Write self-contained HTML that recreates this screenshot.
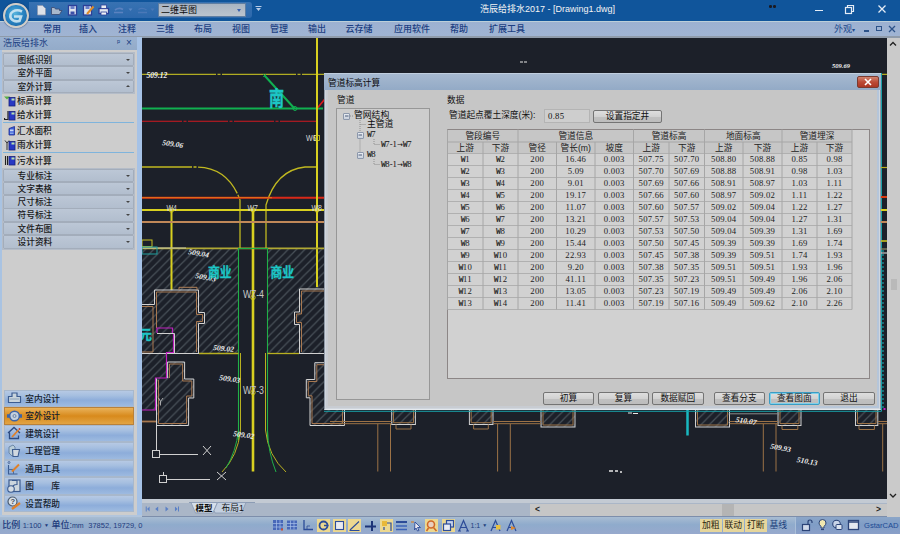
<!DOCTYPE html><html lang="zh"><head><meta charset="utf-8"><title>浩辰给排水2017</title><style>
*{box-sizing:border-box;margin:0;padding:0}
html,body{width:900px;height:534px;overflow:hidden;background:#1c2029}
body{position:relative;font-family:"Liberation Sans","Noto Sans CJK SC",sans-serif;font-size:9px;color:#111;line-height:1}
.a{position:absolute;white-space:nowrap}
#title{left:0;top:0;width:900px;height:20.500px;background:#10559b}
#qat{left:29px;top:2px;width:223px;height:15.500px;background:linear-gradient(#3872b2,#2c68ac);border-radius:0 3px 3px 0}
#menu{left:0;top:20.500px;width:900px;height:17.500px;background:linear-gradient(#9cb1d1,#a0b4d3);border-top:1.500px solid #bccfd9;border-bottom:2px solid #8f9baa}
.mi{top:3px;font-size:9px;font-weight:500;color:#1c3f82;transform:translateX(-50%)}
#left{left:0;top:37px;width:137px;height:477.500px;background:#cdcdcd;border-left:2px solid #a9c3e2}
#lhead{left:0;top:37px;width:137px;height:13px;background:linear-gradient(#9bb2d0,#93abc9);color:#1c3f82;font-size:9px;padding:2px 0 0 3px}
#lsplit{left:137px;top:37px;width:5px;height:480px;background:#a6c2e6}
.pb{left:3px;width:131px;height:13.5px;background:linear-gradient(#bcc7d6,#b2bece);border:1px solid #a3adbb;border-radius:1px;font-size:8.7px;font-weight:500;color:#1a1a1a;padding:2px 0 0 13.5px}
.pb i{position:absolute;right:3px;top:5px;width:0;height:0;border:2px solid transparent;border-top:2.5px solid #444}
.pb i.up{border-top:none;border-bottom:2.5px solid #444;top:4px}
.pi{left:17px;font-size:8.7px;font-weight:500;color:#1a1a1a}
.sep{left:3px;width:131px;height:1px;background:#7fb4dc}
.ico{width:6px;height:8px;background:#2744b8;border:1px solid #16257a}
.nb{left:4px;width:130px;height:17.5px;background:linear-gradient(#b6c9e4 0%,#a6bfe0 30%,#8dadda 62%,#9dbae0 100%);border:1px solid #a8b8cc;font-size:8.7px;font-weight:500;color:#141c2c;padding:4px 0 0 20.300px}
.nb.sel{background:linear-gradient(#e9b25a,#d88a1c 50%,#e2a444);border-color:#b9813a}
#draw{left:142px;top:38px}
#vsb{left:887px;top:38px;width:13px;height:479px;background:#cacaca}
#tabrow{left:142px;top:499px;width:745px;height:18px;background:#aab6c7;border-top:4px solid #c3cad3;border-bottom:1px solid #7d8eab}
#hsb{left:530px;top:503.500px;width:357px;height:12.500px;background:#c6c6c6}
#status{left:0;top:517px;width:900px;height:17px;background:linear-gradient(#a8bcd2 0,#8fabcc 45%,#97a9cd 100%)}
#dlg{left:324px;top:73px;width:557px;height:337px;background:linear-gradient(90deg,#c8ccd2,#c8ccd2 60%,#b4c5da);border:1px solid #8f99a6;border-bottom-color:#e4e8ec;box-shadow:0 0 0 1px #d0d6de inset}
#dlgtitle{left:324px;top:73px;width:557px;height:17px;background:linear-gradient(#a6b9d0,#93aac6);border-top:1px solid #c0cede;color:#0b0b0b;font-size:8.7px;padding:4.5px 0 0 4px}
#dlgbody{left:328px;top:90px;width:549px;height:316px;background:#c6c6c6}
.btn{height:13px;background:linear-gradient(#dedede,#d2d2d2 50%,#c0c0c0 55%,#bdbdbd);border:1px solid #747474;border-radius:2px;text-align:center;font-size:8.7px;color:#111;padding-top:1.5px}
.lbl{font-size:8.7px;color:#111}
.tree{font-size:8.8px;color:#0c0c0c}
.mono{font-family:"Liberation Serif",serif;font-size:8.7px}
.tb{width:7px;height:7px;border:1px solid #8c98ac;background:linear-gradient(#e8ecf2,#c8d0dc);border-radius:1px}
.tm{font-family:"Liberation Mono",monospace;font-size:8.2px;letter-spacing:-0.57px;font-weight:bold}
.ar{font-family:"DejaVu Sans",sans-serif;letter-spacing:0;font-size:7px;font-weight:normal}
#grid{left:447px;top:129px;width:423px;height:250px;background:#d1d1d1;border:1px solid #8c8686}
.c{position:absolute;text-align:center;white-space:nowrap;color:#222}
.hc{font-size:8.7px;font-family:"Liberation Sans","Noto Sans CJK SC",sans-serif}
.dc{font-family:"Liberation Serif",serif;font-size:8.7px;letter-spacing:.25px}
.dw{font-family:"Liberation Mono",monospace;font-size:8.2px;letter-spacing:-0.57px;font-weight:bold;color:#333}
</style></head><body>
<div id="title" class="a"></div>
<div id="qat" class="a"></div>
<div class="a" style="left:53px;top:2px;width:107px;height:14px;background:#1f2a3c;opacity:0"></div>
<div class="a" style="left:158px;top:3px;width:88px;height:14px;background:linear-gradient(#a9b4c2,#bcc4ce);border:1px solid #5f7ea2;color:#0c0c0c;font-size:9px;padding:2px 0 0 2px">二维草图<span class="a" style="right:4px;top:5px;width:0;height:0;border:2.5px solid transparent;border-top:3px solid #3a62b0"></span></div>
<svg class="a" style="left:30px;top:0" width="240" height="20" fill="none"><path d="M7.500 5.500h5l3 3v6.500h-8z" fill="#dde1e8" stroke="#8a98b0" stroke-width=".8"/><path d="M21.500 14.500v-7h3l1 1.500h4v1.500h2.500l-2.500 4z" fill="#a8b8cc" stroke="#3c4f78" stroke-width=".9"/><rect x="38.500" y="5.500" width="8" height="9.500" fill="#dfe4ee" stroke="#2c3f98" stroke-width="1.300"/><rect x="40.500" y="6" width="4" height="3" fill="#6a7fc8"/><rect x="40.500" y="11.500" width="4" height="3" fill="#3c50a8"/><rect x="53.500" y="5.500" width="8" height="9.500" fill="#dfe4ee" stroke="#2c3f98" stroke-width="1.300"/><rect x="55.500" y="6" width="4" height="3" fill="#6a7fc8"/><path d="M57 14l6.500-7.500" stroke="#e08a28" stroke-width="2"/><rect x="69" y="8.500" width="9.500" height="5" fill="#e4e8f0" stroke="#2c3f98" stroke-width="1.300"/><rect x="71" y="5" width="5.500" height="3.500" fill="#e8ecf2" stroke="#2c3f98" stroke-width=".8"/><rect x="71" y="12" width="5.500" height="3" fill="#f0f2f6" stroke="#2c3f98" stroke-width=".8"/><path d="M84 12.500h9M85 10q4-3 8-.5" stroke="#5b82c0" stroke-width="1.600"/><path d="M98.500 8.500l2 2.500 2-2.500z" fill="#5b88c4"/><path d="M108 12.500h9M108.500 9.500q4-2.500 8 .5" stroke="#4a78b8" stroke-width="1.400"/><path d="M120.500 8.500l2 2.500 2-2.500z" fill="#4a78b8"/><path d="M226 8l2.500 3 2.500-3z" fill="#b9cde8"/><path d="M225.500 6.500h6" stroke="#b9cde8" stroke-width="1"/></svg>
<div class="a" style="left:480px;top:5px;font-size:9px;color:#f4f4f4">浩辰给排水2017 - [Drawing1.dwg]</div>
<div class="a" style="left:769px;top:5px;width:2.500px;height:2.500px;border-radius:50%;background:#1a1a22;box-shadow:4px 0 0 #1a1a22"></div>
<div class="a" style="left:815px;top:9.500px;width:8px;height:1.200px;background:#e4ecf6"></div>
<svg class="a" style="left:844px;top:3.500px" width="11" height="11" fill="none" stroke="#e4ecf6" stroke-width="1.200"><rect x="1.500" y="3.500" width="6" height="6"/><path d="M3.500 3.500v-2h6v6h-2"/></svg>
<svg class="a" style="left:877px;top:4px" width="10" height="10"><path d="M1.500 1.500L8.500 8.500M8.500 1.500L1.500 8.500" stroke="#e4ecf6" stroke-width="1.300"/></svg>
<div id="menu" class="a"></div>
<div class="a mi" style="left:52px;top:25px">常用</div>
<div class="a mi" style="left:88px;top:25px">插入</div>
<div class="a mi" style="left:127px;top:25px">注释</div>
<div class="a mi" style="left:165px;top:25px">三维</div>
<div class="a mi" style="left:203px;top:25px">布局</div>
<div class="a mi" style="left:241px;top:25px">视图</div>
<div class="a mi" style="left:279px;top:25px">管理</div>
<div class="a mi" style="left:317px;top:25px">输出</div>
<div class="a mi" style="left:359px;top:25px">云存储</div>
<div class="a mi" style="left:412px;top:25px">应用软件</div>
<div class="a mi" style="left:459px;top:25px">帮助</div>
<div class="a mi" style="left:507px;top:25px">扩展工具</div>
<div class="a" style="left:834px;top:25px;font-size:9px;color:#1d4a8c">外观<span style="font-size:6px">▾</span></div>
<div class="a" style="left:864px;top:30px;width:5px;height:1.5px;background:#2c5288"></div>
<div class="a" style="left:876px;top:26px;width:6px;height:5px;border:1px solid #2c5288"></div>
<svg class="a" style="left:888px;top:25px" width="8" height="8"><path d="M1 1L7 7M7 1L1 7" stroke="#2c5288" stroke-width="1.3"/></svg>
<div class="a" style="left:3px;top:2.800px;width:25.500px;height:25.500px;border-radius:50%;background:radial-gradient(circle at 45% 40%,#58b4dc 0,#2a86c4 45%,#1a5c9c 100%);border:2.300px solid #d2cec8;box-shadow:0 0 1.500px #0a2a5a"></div>
<svg class="a" style="left:3px;top:3px" width="26" height="26"><path d="M19 8.500q-5-2.500-9 0t-2 7q3 4 8.500 2.500l1.500-4.500h-7" fill="none" stroke="#d8ecf6" stroke-width="2.600" opacity=".85"/></svg>
<div id="left" class="a"></div><div id="lsplit" class="a"></div>
<div id="lhead" class="a">浩辰给排水<span class="a" style="left:117px;top:2px;font-size:8px">ᵖ</span><span class="a" style="left:126px;top:1px;font-size:10px">×</span></div>
<div class="a" style="left:2px;top:51.5px;width:133px;height:42.5px;border:1px solid #b4bcc8;background:#c4ccd8"></div>
<div class="a" style="left:2px;top:167.5px;width:133px;height:82px;border:1px solid #b4bcc8;background:#c4ccd8"></div>
<div class="a pb" style="top:52.5px">图纸识别<i class=""></i></div>
<div class="a pb" style="top:66.0px">室外平面<i class=""></i></div>
<div class="a pb" style="top:79.5px">室外计算<i class="up"></i></div>
<svg class="a" style="left:4px;top:95.5px" width="13" height="11"><path d="M0 .5h6l-3 3z" fill="#58b048"/><rect x="5" y="1.500" width="6" height="8.500" fill="#2838c4" stroke="#18227a" stroke-width=".8"/><rect x="7.500" y="2.500" width="3" height="2" fill="#b8e0b0"/></svg><div class="a pi" style="top:97.0px">标高计算</div>
<svg class="a" style="left:4px;top:109.5px" width="13" height="11"><path d="M4 1v8.500h-3.500v-1.500" stroke="#222" stroke-width="1.200" fill="none"/><rect x="5" y="1.500" width="6" height="8.500" fill="#2838c4" stroke="#18227a" stroke-width=".8"/><rect x="7.500" y="2.500" width="3" height="2" fill="#b8e0b0"/></svg><div class="a pi" style="top:111.0px">给水计算</div>
<div class="a sep" style="top:122px"></div>
<svg class="a" style="left:4px;top:125.0px" width="13" height="11"><path d="M5 3.500l5.500-2v8.500h-5.500z" fill="#3a5cd8" stroke="#1c2c90" stroke-width=".8"/><rect x="6" y="4.500" width="3.500" height="1.800" fill="#c8d8f4"/><rect x="6" y="7.500" width="3.500" height="1.500" fill="#88a8e8"/></svg><div class="a pi" style="top:126.5px">汇水面积</div>
<svg class="a" style="left:4px;top:139.5px" width="13" height="11"><path d="M1 .5l2 2.500v7M5 .5l-2 2.500" stroke="#333" stroke-width="1" fill="none"/><rect x="5" y="1.500" width="6" height="8.500" fill="#2838c4" stroke="#18227a" stroke-width=".8"/><rect x="7.500" y="2.500" width="3" height="2" fill="#b8e0b0"/></svg><div class="a pi" style="top:141.0px">雨水计算</div>
<div class="a sep" style="top:152px"></div>
<svg class="a" style="left:4px;top:155.0px" width="13" height="11"><path d="M1.500 1v9M3.500 1v9" stroke="#222" stroke-width="1.100" fill="none"/><rect x="5" y="1.500" width="6" height="8.500" fill="#2838c4" stroke="#18227a" stroke-width=".8"/><rect x="7.500" y="2.500" width="3" height="2" fill="#b8e0b0"/></svg><div class="a pi" style="top:156.5px">污水计算</div>
<div class="a pb" style="top:168.5px">专业标注<i class=""></i></div>
<div class="a pb" style="top:181.8px">文字表格<i class=""></i></div>
<div class="a pb" style="top:195.1px">尺寸标注<i class=""></i></div>
<div class="a pb" style="top:208.4px">符号标注<i class=""></i></div>
<div class="a pb" style="top:221.7px">文件布图<i class=""></i></div>
<div class="a pb" style="top:235.0px">设计资料<i class=""></i></div>
<div class="a nb" style="top:389.6px">室内设计</div>
<svg class="a" style="left:7px;top:391.4px" width="16" height="14"><path d="M1.500 11.500v-6h3.500v-3.500h5v3.500h3.500v6z" fill="#c8d4dc" stroke="#3c5c90" stroke-width="1.200"/><path d="M3 8h9" stroke="#8aa0b8"/></svg>
<div class="a nb sel" style="top:407.1px">室外设计</div>
<svg class="a" style="left:7px;top:408.9px" width="16" height="14"><path d="M0 7h15" stroke="#3c64a8" stroke-width="3.500"/><circle cx="7.500" cy="7" r="4.800" fill="#c4d0dc" stroke="#3c64a8" stroke-width="1.400"/><circle cx="7.500" cy="7" r="1.500" fill="none" stroke="#6c84a8"/></svg>
<div class="a nb" style="top:424.6px">建筑设计</div>
<svg class="a" style="left:7px;top:426.4px" width="16" height="14"><path d="M1 7l6-5.500 6 5.500M2.500 6.500v6h9v-3" fill="none" stroke="#2c4a80" stroke-width="1.300"/><path d="M5 11l6.500-7" stroke="#e08028" stroke-width="1.800"/><circle cx="12.500" cy="3" r="1" fill="#d04020"/></svg>
<div class="a nb" style="top:442.1px">工程管理</div>
<svg class="a" style="left:7px;top:443.9px" width="16" height="14"><path d="M2 3l4-2 2 2v7l-3 2-3-3z" fill="#b8ccd8" stroke="#6c88a8"/><path d="M5.500 5.500h7l-1.500 7h-5z" fill="#d0d8e0" stroke="#3c5c90" stroke-width="1.100"/></svg>
<div class="a nb" style="top:459.6px">通用工具</div>
<svg class="a" style="left:7px;top:461.4px" width="16" height="14"><path d="M1.500 4v9h9" fill="none" stroke="#3c5c90" stroke-width="1.100"/><path d="M1.500 8.500h5v4.500" fill="none" stroke="#4c6c9c"/><path d="M5 10.500l7-7" stroke="#e08028" stroke-width="2"/><circle cx="2" cy="1.500" r="1" fill="none" stroke="#3c5c90" stroke-width=".8"/></svg>
<div class="a nb" style="top:477.1px">图　　库</div>
<svg class="a" style="left:7px;top:478.9px" width="16" height="14"><rect x="2" y="1" width="11" height="11.500" fill="#ccd6de" stroke="#3c5c90" stroke-width="1.200"/><path d="M5 1.500h5v4q-5 0-5 5" fill="none" stroke="#3c5c90" stroke-width="1.100"/><circle cx="4" cy="10" r="3.300" fill="#d4dce4" stroke="#3c5c90" stroke-width="1.100"/></svg>
<div class="a nb" style="top:494.6px">设置帮助</div>
<svg class="a" style="left:7px;top:496.4px" width="16" height="14"><circle cx="5.500" cy="5.500" r="4.500" fill="#d8e0e8" stroke="#4c5c70" stroke-width="1.200"/><text x="3.400" y="8.200" font-size="7.500" font-weight="bold" fill="#3c4c60" font-family="Liberation Sans,sans-serif">?</text><path d="M5 13l8-6" stroke="#e08028" stroke-width="2.200"/></svg>
<svg id="draw" class="a" width="745" height="461" viewBox="142 38 745 461" style="background:#1c2029;overflow:hidden">
<defs>
<pattern id="hat" width="8.400" height="8.400" patternUnits="userSpaceOnUse"><path d="M-1 9.400L9.400 -1M-1 1L1 -1M7.400 9.400L9.400 7.400" stroke="#485058" stroke-width="1.250"/></pattern>
</defs>
<!-- hatch areas -->
<g fill="url(#hat)">
<rect x="142" y="249" width="96.500" height="104.500"/>
<rect x="267.500" y="249" width="60" height="104.500"/>
<path d="M142 353.500H167V362H184.600V379H193.800V398H188.600V425.500H156V410H142Z"/>
<path d="M330 362.700H314.800V379.500H306.300V397.800H310V425.500H344.500V405H330Z"/>
</g>
<!-- top yellow dashed line -->
<path d="M142 74.300H887" stroke="#b0ac22" stroke-width="1.200" stroke-dasharray="74 1.500 3 1.500"/>
<text x="146.5" y="77.5" font-size="7.6" font-weight="bold" font-style="italic" fill="#f0f0f0" font-family="Liberation Serif,serif">509.12</text>
<!-- green -->
<path d="M142 108.5H323" stroke="#10b050" stroke-width="2"/>
<path d="M264.500 75.500L294.500 108.500" stroke="#10b050" stroke-width="2"/><path d="M263 74l3 3m0-3l-3 3" stroke="#10b050" stroke-width=".8"/>
<circle cx="295" cy="108.5" r="2" fill="none" stroke="#10b050" stroke-width="1"/>
<text x="269" y="78" font-size="15" font-weight="bold" fill="#1cc6c6" font-family="Liberation Sans,Noto Sans CJK SC,sans-serif" transform="translate(0 .5) scale(1 1.350)" stroke="#1cc6c6" stroke-width=".35">南</text>
<!-- red dashed -->
<path d="M142 121.300H318" stroke="#d01820" stroke-width="1.100" stroke-dasharray="40 1.500 3 1.500"/>
<path d="M317 108.500L324.500 99.500" stroke="#e01820" stroke-width="1.600"/>
<text x="162" y="145" font-size="7.6" font-weight="bold" font-style="italic" fill="#f0f0f0" font-family="Liberation Serif,serif" transform="rotate(8 162 145)">509.06</text>
<!-- yellow curves -->
<path d="M142 167H196Q228 167 240 200V248" stroke="#c0b820" stroke-width="1.300" fill="none" stroke-dasharray="50 1.500 3 1.500"/>
<path d="M317 167H305Q276 170 266 205V248" stroke="#c0b820" stroke-width="1.300" fill="none"/>
<!-- red-orange thick -->
<path d="M142 197.700H325" stroke="#d82818" stroke-width="2"/><path d="M142 197.700H272" stroke="#e06a18" stroke-width="1.200"/>
<!-- yellow main -->
<path d="M142 210H325" stroke="#d8d020" stroke-width="2"/>
<path d="M317 38V287" stroke="#d8d020" stroke-width="2"/>
<path d="M171.5 210V290" stroke="#d8d020" stroke-width="2"/>
<path d="M253 210V471.500" stroke="#d8d020" stroke-width="2.600"/>
<g fill="none" stroke="#d8d020" stroke-width="0.8"><circle cx="171.5" cy="210" r="2.2"/><circle cx="253" cy="210" r="2.2"/><circle cx="317" cy="210" r="2.2"/><circle cx="253" cy="297.500" r="2.200"/><circle cx="253" cy="392.500" r="2.200"/><rect x="314.500" y="135.500" width="5" height="5"/></g>
<g font-size="6.300" fill="#e4e4e4" font-family="Liberation Sans,sans-serif"><g transform="scale(1 1.350)" font-size="7" fill="#d8d8d8"><text x="166.500" y="156">W4</text><text x="247.500" y="156">W7</text><text x="311.500" y="156">W8</text><text x="306" y="104.500">W6</text></g><text x="243" y="238.500" font-size="8.800" fill="#c8c8c8" transform="scale(1 1.250)">W7-4</text><text x="243" y="315.300" font-size="8.800" fill="#c8c8c8" transform="scale(1 1.250)">W7-3</text></g>
<!-- tan line -->
<path d="M142 222H325" stroke="#c08858" stroke-width="2"/>
<!-- gray-olive line -->
<path d="M142 248.300H325" stroke="#b0a834" stroke-width="1.800"/><path d="M142 248H186" stroke="#c8c8b0" stroke-width="1.200"/>
<!-- small rects left -->
<rect x="142" y="240" width="10" height="6.5" fill="none" stroke="#c8c020" stroke-width="1"/>
<rect x="142" y="247" width="15" height="7" fill="none" stroke="#20a0a0" stroke-width="1"/>
<!-- green thin -->
<path d="M238.5 440V248.5H267.5V440" stroke="#20b048" stroke-width="1.1" fill="none"/>
<path d="M240.5 353V430Q238 456 222 472" stroke="#b8b020" stroke-width="1" fill="none"/>
<path d="M265.500 353V430Q268 456 286 472" stroke="#b8b020" stroke-width="1" fill="none"/>
<path d="M238.5 430Q236 452 226 468" stroke="#20b048" stroke-width="1" fill="none"/>
<path d="M267.5 430Q268 452 276 472" stroke="#20b048" stroke-width="1" fill="none"/>
<!-- labels -->
<g font-size="7.6" font-weight="bold" font-style="italic" fill="#f0f0f0" font-family="Liberation Serif,serif">
<text x="188" y="254" transform="rotate(10 188 254)">509.04</text>
<text x="195" y="278" transform="rotate(10 195 278)">509.03</text>
<text x="213" y="350" transform="rotate(5 213 350)">509.02</text>
<text x="219" y="380" transform="rotate(8 219 380)">509.03</text>
<text x="233" y="436" transform="rotate(8 233 436)">509.02</text>
</g>
<g font-size="11.800" font-weight="bold" fill="#1cc6c6" stroke="#1cc6c6" stroke-width=".3" font-family="Liberation Sans,Noto Sans CJK SC,sans-serif"><text x="208" y="241" transform="scale(1 1.150)">商业</text><text x="270.500" y="241" transform="scale(1 1.150)">商业</text><text x="139" y="338.500" font-size="13">元</text></g>
<!-- building outlines -->
<g fill="none" stroke-width="1">
<path d="M142 304.500H154.500V290H198.500V312.500H204.500V323.500H198.500V353.500" stroke="#d4d4d4"/>
<path d="M142 306.500H153M156.500 292H196.500V314.500H202.500V321.500H196.500V352M156.500 292V328" stroke="#a87850"/>
<path d="M153 306.500V352" stroke="#a87850"/>
<path d="M179 290V287.300H197V290" stroke="#b08058"/>
<path d="M142 353.500H199" stroke="#d0d0d0"/>
<path d="M142 352H153" stroke="#a87850"/>
<path d="M199 353.500H238.500" stroke="#b8b020" stroke-width="1.300"/>
<path d="M267.500 353.500H299" stroke="#b8b020" stroke-width="1.300"/>
<path d="M299 353.500H325" stroke="#d0d0d0"/>
<path d="M325 289H299.500V312H294.500V324.500H299.500V353.500" stroke="#d4d4d4"/>
<path d="M325 291H301.500V314H296.500V322.500H301.500V352" stroke="#a87850"/>
<!-- magenta -->
<path d="M157 333V328H172.500V333M173.500 333V352.500H166.500V378H155.500V410H142" stroke="#c020c0" stroke-width="1.200"/>
<path d="M157 333.500H174.500V353" stroke="#d0d0d0"/>
<!-- lower-left building -->
<path d="M167.600 378V362H184.600V379H193.800V398H188.600V425.500H156.500V378.500" stroke="#d4d4d4"/>
<path d="M169.500 378V364H182.600V381H191.800V396H186.600V423.500H158.500V380" stroke="#a87850"/>
<path d="M142 421.500H156" stroke="#a87850" stroke-width="1.800"/>
<path d="M156.500 425V450" stroke="#d0d0d0"/>
<path d="M158.500 398l2 3.500 2.500-3.500M160.500 401.500v4" stroke="#c8c8c8" stroke-width=".8"/>
<!-- right lower building -->
<path d="M330 362.700H314.800V379.500H306.300V397.800H310V425.500H344.500V405" stroke="#d4d4d4"/>
<path d="M330 364.700H316.800V381.500H308.300V395.800H312V423.500H342.500V405" stroke="#a87850"/>
</g>
<!-- UCS-like symbols -->
<g fill="none" stroke="#d0d0d0" stroke-width="1">
<rect x="152.500" y="450.500" width="7" height="7"/><path d="M159.500 454.500H198M203 446L211 455M211 446L203 455"/>
<rect x="159.500" y="475.500" width="7" height="7"/><path d="M163.500 472V476M166.500 479.500H210M217 472L226 480M226 472L217 480"/>
</g>
<!-- bottom right of dialog -->
<g>
<g fill="url(#hat)" stroke="#d0d0d0" stroke-width="1">
<rect x="391.700" y="405" width="23.700" height="19.500"/>
<rect x="469.400" y="405" width="23.600" height="19.500"/>
<rect x="541" y="405" width="34" height="22"/>
<rect x="695.500" y="405" width="34" height="22"/>
<rect x="778" y="405" width="23" height="20.500"/>
<rect x="855.500" y="405" width="22.300" height="20.500"/>
</g>
<g stroke="#9c7246" stroke-width="1" fill="none">
<path d="M330 421.500H391.700M330 423.700H391.700M377.800 424V471.500M390.500 424V471.500M396 424.500V429H411V424.500"/>
<path d="M393.500 405V422.700H413.500V405M471.200 405V422.700H491.200V405"/>
<path d="M493 421.500H541M493 423.700H541M497.600 424V471.500M510.300 424V471.500M473.600 424.500V429H488.300V424.500"/>
<path d="M543 405V425H573V405M697.500 405V425H727.500V405M780 405V423.500H799V405M857.500 405V423.500H876V405"/>
<path d="M729.500 421.500H778M729.500 423.700H778M763.300 424V471.500M776 424V471.500M782 425.500V429.500H797.800V425.500"/>
<path d="M877.800 421.500H887M877.800 423.700H887M882.700 424V471.500M859 425.500V429.500H874.400V425.500"/>
</g>
<path d="M729.500 413.800H778" stroke="#8a8a8a" stroke-width="1"/>
<path d="M687.500 409V435.500" stroke="#18b8c0" stroke-width="2.500"/>
<path d="M324 411.300H881.500V73" stroke="#18a0a8" stroke-width="1" fill="none"/>
<g font-size="7.600" font-weight="bold" font-style="italic" fill="#f0f0f0" font-family="Liberation Serif,serif">
<text x="735.500" y="422" transform="rotate(8 735.500 422)">510.07</text>
<text x="770" y="448.500" transform="rotate(10 770 448.500)">509.93</text>
<text x="796.500" y="462" transform="rotate(10 796.500 462)">510.13</text>
</g>
<path d="M609 471h4m2 0h3m2 1h2" stroke="#e8e8e8" stroke-width="1.300"/>
<path d="M628 413h4m1 .5h5" stroke="#e8e8e8" stroke-width="1.200"/>
<rect x="883.500" y="408" width="2" height="2" fill="#c020c0"/>
</g>
<!-- top small white marks -->
<path d="M520 62h3m1 0h3" stroke="#e8e8e8" stroke-width="1"/>
<text x="832" y="68" font-size="6.500" font-weight="bold" font-style="italic" fill="#f0f0f0" font-family="Liberation Serif,serif">509.69</text>
<!-- right strip marks -->
<g stroke-width="1.2">
<path d="M881 167.500h6" stroke="#b8b020"/><path d="M881 241h6" stroke="#c8c020" stroke-width="1.600"/><path d="M881 253h6" stroke="#c8c8c8"/><path d="M881 197h6" stroke="#d83a10" stroke-width="2"/><path d="M881 210h6" stroke="#d8d020" stroke-width="2"/><path d="M881 222h6" stroke="#c08858" stroke-width="2"/><path d="M881 249h6" stroke="#8c8c68"/>
<path d="M883 250V409" stroke="#18a0a8" stroke-dasharray="2 2"/>
</g>
</svg>

<div id="vsb" class="a"></div>
<svg class="a" style="left:889px;top:41px" width="8" height="6"><path d="M1 4.500l3-3 3 3" stroke="#222" stroke-width="1.300" fill="none"/></svg>
<svg class="a" style="left:889px;top:493px" width="8" height="6"><path d="M1 1l3 3 3-3" stroke="#222" stroke-width="1.300" fill="none"/></svg>
<div class="a" style="left:891px;top:279px;width:6px;height:11px;background:#b9b9b9"></div>
<div id="tabrow" class="a"></div>
<div id="hsb" class="a"></div>
<div class="a" style="left:535px;top:505px;font-size:8.500px;color:#222;font-weight:bold">&lt;</div>
<div class="a" style="left:876px;top:505px;font-size:8.500px;color:#222;font-weight:bold">&gt;</div>
<div class="a" style="left:722px;top:504px;width:12px;height:11.500px;background:#b4b4b4"></div>
<svg class="a" style="left:144px;top:505px" width="44" height="8" fill="#5a80c6" transform="scale(.86)" transform-origin="0 4"><path d="M2 1h1.200v6h-1.200zM3.500 4l3-3v6z"/><path d="M13 4l3.500-3v6z"/><path d="M28.500 4l-3.500-3v6z"/><path d="M39.500 1h1.200v6h-1.200zM39 4l-3-3v6z"/></svg>
<svg class="a" style="left:186px;top:499px" width="70" height="18"><path d="M3 3.500h66" stroke="#8c9cb4" stroke-width="1" fill="none"/><path d="M5 3.500l4.500 10.500h17.500l4.500-10.500z" fill="#d6dfea" stroke="#8c9cb4" stroke-width=".9"/><path d="M31.500 3.500l-3.500 8 1 2.500h26.500l4.500-10.500z" fill="#c4d0e0" stroke="#8c9cb4" stroke-width=".9"/></svg>
<div class="a" style="left:195.500px;top:503.800px;font-size:8.500px;font-weight:bold;color:#0c0c0c">模型</div>
<div class="a" style="left:221.500px;top:503.800px;font-size:8.700px;color:#111">布局1</div>
<div class="a" style="left:0;top:514.500px;width:142px;height:2.500px;background:#b2c5dc"></div>
<div id="status" class="a"></div>
<div class="a" style="left:2.200px;top:520.500px;font-size:9px;font-weight:500;color:#1f3b7c">比例 <span style="font-size:7.500px">1:100</span> <span style="font-size:5px;vertical-align:1px">▼</span> 单位:<span style="font-size:7px">mm</span> <span style="font-size:7.500px">&nbsp;37852, 19729, 0</span></div>
<svg class="a" style="left:271.5px;top:518.5px" width="13" height="13"><rect x="1" y="1" width="10" height="10" fill="#4868b8"/><path d="M1 4.500h10M1 8h10M4.500 1v10M8 1v10" stroke="#a8c0e8" stroke-width=".7"/><rect x="9" y="9.500" width="2" height="2" fill="#d05030"/></svg>
<svg class="a" style="left:286.0px;top:518.5px" width="13" height="13"><rect x="1" y="1.500" width="10" height="9" fill="#4868b8"/><path d="M1 4.500h10M1 7.500h10M4.500 1.500v9M8 1.500v9" stroke="#a8c0e8" stroke-width=".7"/></svg>
<svg class="a" style="left:301.5px;top:518.5px" width="13" height="13"><path d="M2 1v9.500h9" stroke="#2c4c98" stroke-width="1.300" fill="none"/><path d="M5 10v-3h3" stroke="#2c4c98" stroke-width=".8" fill="none"/></svg>
<svg class="a" style="left:317.2px;top:518.5px" width="13" height="13"><rect x="0" y="0" width="13" height="13" fill="#ecd890"/><circle cx="6.500" cy="6.500" r="4" fill="none" stroke="#2c4c98" stroke-width="1.800"/><path d="M7 6.500h4.500" stroke="#2c4c98" stroke-width="1.500"/></svg>
<svg class="a" style="left:333.1px;top:518.5px" width="13" height="13"><rect x="0" y="0" width="13" height="13" fill="#ecd890"/><rect x="2.500" y="2.500" width="8" height="8" fill="#e8eaf0" stroke="#2c4c98" stroke-width="1.100"/></svg>
<svg class="a" style="left:348.1px;top:518.5px" width="13" height="13"><rect x="0" y="0" width="13" height="13" fill="#ecd890"/><path d="M1.500 11.500h10M2 11L11 2.500" stroke="#2c4c98" stroke-width="1.100"/></svg>
<svg class="a" style="left:364.0px;top:518.5px" width="13" height="13"><path d="M1 7.500h11M8 2v10" stroke="#1c3478" stroke-width="2"/></svg>
<svg class="a" style="left:379.5px;top:518.5px" width="13" height="13"><rect x="0" y="0" width="13" height="13" fill="#ecd890"/><rect x="2" y="2" width="5" height="5" fill="#e8b838"/><path d="M7 4h4v8M4 8v3" stroke="#2c4c98" stroke-width="1.200" fill="none"/></svg>
<svg class="a" style="left:395.2px;top:518.5px" width="13" height="13"><path d="M1 3h11" stroke="#2c4c98" stroke-width="2"/><path d="M1 7h11M1 10.500h11" stroke="#3c64b8" stroke-width="1.300"/></svg>
<svg class="a" style="left:409.5px;top:518.5px" width="13" height="13"><path d="M5 3l5.500 5.500h-3l1.500 3-1.500.5-1.500-3-1.500 2z" fill="#e8e8f0" stroke="#2c4c98" stroke-width=".9"/><path d="M1 3h3" stroke="#d08030" stroke-width="1.200"/></svg>
<svg class="a" style="left:425.3px;top:518.5px" width="13" height="13"><rect x="0" y="0" width="13" height="13" fill="#ecd890"/><circle cx="6" cy="5.500" r="3.500" fill="#e8d0c0" stroke="#d06828" stroke-width="1.600"/><path d="M8.500 8.500l3 3.500M3.500 9l-2 3" stroke="#d06828" stroke-width="1.600"/></svg>
<svg class="a" style="left:442.1px;top:518.5px" width="13" height="13"><rect x="0" y="0" width="13" height="13" fill="#ecd890"/><rect x="4.500" y="1.500" width="7" height="6.500" fill="#c8d4ec" stroke="#2c4c98" stroke-width="1.200"/><rect x="1.500" y="5" width="7" height="6.500" fill="#e8ecf4" stroke="#2c4c98" stroke-width="1.200"/></svg>
<svg class="a" style="left:457.1px;top:518.5px" width="13" height="13"><path d="M2 12l4.500-10.500 4.500 10.500M3.500 8.500h6M1 12h3M9 12h3" stroke="#2c4c98" stroke-width="1.200" fill="none"/></svg>
<svg class="a" style="left:489.2px;top:518.5px" width="13" height="13"><path d="M2 12l4.500-10.500 4.500 10.500M3.500 8.500h6" stroke="#2c4c98" stroke-width="1.200" fill="none"/><rect x="7" y="6" width="4.500" height="4.500" fill="#e8c040"/></svg>
<svg class="a" style="left:505.1px;top:518.5px" width="13" height="13"><path d="M2 12l4.500-10.500 4.500 10.500M3.500 8.500h6" stroke="#2c4c98" stroke-width="1.200" fill="none"/><path d="M6 7l5 2-5 2z" fill="#e08830"/></svg>
<div class="a" style="left:470.5px;top:521.5px;font-size:7px;color:#1d3f7c">1:1 <span style="font-size:5px;vertical-align:1px">▼</span></div>
<div class="a" style="left:795px;top:517px;width:105px;height:17px;background:linear-gradient(#8ca6c8,#7f9dc6 45%,#8a9fc8);border-left:1px solid #aabfd8"></div>
<div class="a" style="left:700.0px;top:518.5px;width:21.5px;height:13px;font-size:8.8px;color:#2a2410;text-align:center;padding-top:2px;background:#e6d69c;">加粗</div>
<div class="a" style="left:722.5px;top:518.5px;width:21.5px;height:13px;font-size:8.8px;color:#2a2410;text-align:center;padding-top:2px;background:#e6d69c;">联动</div>
<div class="a" style="left:745.0px;top:518.5px;width:21.5px;height:13px;font-size:8.8px;color:#2a2410;text-align:center;padding-top:2px;background:#e6d69c;">打断</div>
<div class="a" style="left:767.5px;top:518.5px;width:21.5px;height:13px;font-size:8.8px;color:#1d3f7c;text-align:center;padding-top:2px;">基线</div>
<svg class="a" style="left:800px;top:518px" width="62" height="14" fill="none"><rect x="2.500" y="6.500" width="7" height="6" fill="#d0daea" stroke="#2c4478" stroke-width="1.200"/><path d="M8 6.500v-2.500q0-2 2-2t2 2v1" stroke="#2c4478" stroke-width="1.200"/><path d="M22.500 1.500q-3.500 0-3.500 3.500 0 1.500 2 3.500v1.500h3v-1.500q2-2 2-3.500 0-3.500-3.500-3.500z" fill="#f0e8b0" stroke="#2c4478" stroke-width="1"/><path d="M21 11.500h3" stroke="#2c4478" stroke-width="1.200"/><circle cx="36.500" cy="6" r="3.800" fill="#c8d4e8" stroke="#2c4478" stroke-width="1.100"/><rect x="36" y="6.500" width="6" height="5" rx="1" fill="#dce4f0" stroke="#2c4478" stroke-width="1"/><rect x="48.500" y="2.500" width="10" height="9" fill="#e4e8f0" stroke="#2c4478" stroke-width="1.300"/><path d="M48.500 4h10" stroke="#2c4478" stroke-width="1.500"/></svg>
<div class="a" style="left:864px;top:521.5px;font-size:7.6px;color:#1d4a94">GstarCAD</div>
<div id="dlg" class="a"></div><div id="dlgtitle" class="a">管道标高计算</div><div id="dlgbody" class="a"></div>
<div class="a" style="left:857px;top:76px;width:22px;height:11.500px;background:linear-gradient(#d08470,#bc4a36 50%,#ac3624);border:1px solid #7a3a30;border-radius:2px"></div>
<svg class="a" style="left:864px;top:77.800px" width="8" height="8"><path d="M1 1L7 7M7 1L1 7" stroke="#fff" stroke-width="1.6"/></svg>
<div class="a lbl" style="left:337px;top:96.300px">管道</div>
<div class="a lbl" style="left:447px;top:96.300px">数据</div>
<div class="a" style="left:336px;top:108px;width:94px;height:292px;background:#cdcdcd;border:1px solid #979797"></div>
<div class="a tb" style="left:343px;top:112.5px"></div><div class="a tree" style="left:354px;top:110.5px">管网结构</div>
<div class="a tree" style="left:367px;top:120.3px">主管道</div>
<div class="a tb" style="left:356.5px;top:131.5px"></div><div class="a tree mono" style="left:367px;top:130px"><span class="dw">W</span>7</div>
<div class="a tree mono" style="left:381px;top:139.500px"><span class="dw">W</span>7-1<span class="ar">→</span><span class="dw">W</span>7</div>
<div class="a tb" style="left:356.5px;top:151.500px"></div><div class="a tree mono" style="left:367px;top:150px"><span class="dw">W</span>8</div>
<div class="a tree mono" style="left:381px;top:159.500px"><span class="dw">W</span>8-1<span class="ar">→</span><span class="dw">W</span>8</div>
<svg class="a" style="left:336px;top:108px" width="94" height="80"><path d="M24 12V23.500M24 30.500V43.500M24.500 16.500H30M38 31V36.500H44M38 51V56.500H44M14 8H17" stroke="#8f8f8f" stroke-width="1" fill="none" stroke-dasharray="1 1"/><path d="M9 8H12.500M22.500 27H26M22.500 47H26" stroke="#4a5a78" stroke-width="1"/></svg>
<div class="a lbl" style="left:449px;top:111px">管道起点覆土深度(米):</div>
<div class="a" style="left:544px;top:109px;width:46px;height:14px;background:#cecece;border:1px solid #b4b4b4"></div><div class="a mono" style="left:548px;top:112px;letter-spacing:.3px">0.85</div>
<div class="a btn" style="left:593px;top:109.5px;width:69px">设置指定井</div>
<div id="grid" class="a"></div>
<div class="a" style="left:448px;top:130px;width:404px;height:23.5px;background:#c6c6c6"></div>
<svg class="a" style="left:0;top:0" width="900" height="534"><g stroke="#a6a6a6" stroke-width="1" fill="none"><path d="M447.5 142.0H852"/><path d="M447.5 153.5H852" stroke="#b0b0b0"/><path d="M447.5 165.5H852" stroke="#b0b0b0"/><path d="M447.5 177.5H852" stroke="#b0b0b0"/><path d="M447.5 189.5H852" stroke="#b0b0b0"/><path d="M447.5 201.5H852" stroke="#b0b0b0"/><path d="M447.5 213.5H852" stroke="#b0b0b0"/><path d="M447.5 225.5H852" stroke="#b0b0b0"/><path d="M447.5 237.5H852" stroke="#b0b0b0"/><path d="M447.5 249.5H852" stroke="#b0b0b0"/><path d="M447.5 261.5H852" stroke="#b0b0b0"/><path d="M447.5 273.5H852" stroke="#b0b0b0"/><path d="M447.5 285.5H852" stroke="#b0b0b0"/><path d="M447.5 297.5H852" stroke="#b0b0b0"/><path d="M447.5 309.5H852" stroke="#b0b0b0"/><path d="M447.5 129.5V309.5"/><path d="M483.0 142.0V309.5"/><path d="M518.0 129.5V309.5"/><path d="M556.5 142.0V309.5"/><path d="M595.0 142.0V309.5"/><path d="M633.5 129.5V309.5"/><path d="M669.0 142.0V309.5"/><path d="M704.5 129.5V309.5"/><path d="M743.0 142.0V309.5"/><path d="M782.0 129.5V309.5"/><path d="M817.0 142.0V309.5"/><path d="M852.0 129.5V309.5"/></g></svg>
<div class="c hc" style="left:447.5px;top:132px;width:70.5px">管段编号</div>
<div class="c hc" style="left:518.0px;top:132px;width:115.5px">管道信息</div>
<div class="c hc" style="left:633.5px;top:132px;width:71.0px">管道标高</div>
<div class="c hc" style="left:704.5px;top:132px;width:77.5px">地面标高</div>
<div class="c hc" style="left:782.0px;top:132px;width:70.0px">管道埋深</div>
<div class="c hc" style="left:447.5px;top:144px;width:35.5px">上游</div>
<div class="c hc" style="left:483.0px;top:144px;width:35.0px">下游</div>
<div class="c hc" style="left:518.0px;top:144px;width:38.5px">管径</div>
<div class="c hc" style="left:556.5px;top:144px;width:38.5px">管长(m)</div>
<div class="c hc" style="left:595.0px;top:144px;width:38.5px">坡度</div>
<div class="c hc" style="left:633.5px;top:144px;width:35.5px">上游</div>
<div class="c hc" style="left:669.0px;top:144px;width:35.5px">下游</div>
<div class="c hc" style="left:704.5px;top:144px;width:38.5px">上游</div>
<div class="c hc" style="left:743.0px;top:144px;width:39.0px">下游</div>
<div class="c hc" style="left:782.0px;top:144px;width:35.0px">上游</div>
<div class="c hc" style="left:817.0px;top:144px;width:35.0px">下游</div>
<div class="c dc" style="left:447.5px;top:154.7px;width:35.5px"><span class="dw">W</span>1</div>
<div class="c dc" style="left:483.0px;top:154.7px;width:35.0px"><span class="dw">W</span>2</div>
<div class="c dc" style="left:518.0px;top:154.7px;width:38.5px">200</div>
<div class="c dc" style="left:556.5px;top:154.7px;width:38.5px">16.46</div>
<div class="c dc" style="left:595.0px;top:154.7px;width:38.5px">0.003</div>
<div class="c dc" style="left:633.5px;top:154.7px;width:35.5px">507.75</div>
<div class="c dc" style="left:669.0px;top:154.7px;width:35.5px">507.70</div>
<div class="c dc" style="left:704.5px;top:154.7px;width:38.5px">508.80</div>
<div class="c dc" style="left:743.0px;top:154.7px;width:39.0px">508.88</div>
<div class="c dc" style="left:782.0px;top:154.7px;width:35.0px">0.85</div>
<div class="c dc" style="left:817.0px;top:154.7px;width:35.0px">0.98</div>
<div class="c dc" style="left:447.5px;top:166.7px;width:35.5px"><span class="dw">W</span>2</div>
<div class="c dc" style="left:483.0px;top:166.7px;width:35.0px"><span class="dw">W</span>3</div>
<div class="c dc" style="left:518.0px;top:166.7px;width:38.5px">200</div>
<div class="c dc" style="left:556.5px;top:166.7px;width:38.5px">5.09</div>
<div class="c dc" style="left:595.0px;top:166.7px;width:38.5px">0.003</div>
<div class="c dc" style="left:633.5px;top:166.7px;width:35.5px">507.70</div>
<div class="c dc" style="left:669.0px;top:166.7px;width:35.5px">507.69</div>
<div class="c dc" style="left:704.5px;top:166.7px;width:38.5px">508.88</div>
<div class="c dc" style="left:743.0px;top:166.7px;width:39.0px">508.91</div>
<div class="c dc" style="left:782.0px;top:166.7px;width:35.0px">0.98</div>
<div class="c dc" style="left:817.0px;top:166.7px;width:35.0px">1.03</div>
<div class="c dc" style="left:447.5px;top:178.7px;width:35.5px"><span class="dw">W</span>3</div>
<div class="c dc" style="left:483.0px;top:178.7px;width:35.0px"><span class="dw">W</span>4</div>
<div class="c dc" style="left:518.0px;top:178.7px;width:38.5px">200</div>
<div class="c dc" style="left:556.5px;top:178.7px;width:38.5px">9.01</div>
<div class="c dc" style="left:595.0px;top:178.7px;width:38.5px">0.003</div>
<div class="c dc" style="left:633.5px;top:178.7px;width:35.5px">507.69</div>
<div class="c dc" style="left:669.0px;top:178.7px;width:35.5px">507.66</div>
<div class="c dc" style="left:704.5px;top:178.7px;width:38.5px">508.91</div>
<div class="c dc" style="left:743.0px;top:178.7px;width:39.0px">508.97</div>
<div class="c dc" style="left:782.0px;top:178.7px;width:35.0px">1.03</div>
<div class="c dc" style="left:817.0px;top:178.7px;width:35.0px">1.11</div>
<div class="c dc" style="left:447.5px;top:190.7px;width:35.5px"><span class="dw">W</span>4</div>
<div class="c dc" style="left:483.0px;top:190.7px;width:35.0px"><span class="dw">W</span>5</div>
<div class="c dc" style="left:518.0px;top:190.7px;width:38.5px">200</div>
<div class="c dc" style="left:556.5px;top:190.7px;width:38.5px">19.17</div>
<div class="c dc" style="left:595.0px;top:190.7px;width:38.5px">0.003</div>
<div class="c dc" style="left:633.5px;top:190.7px;width:35.5px">507.66</div>
<div class="c dc" style="left:669.0px;top:190.7px;width:35.5px">507.60</div>
<div class="c dc" style="left:704.5px;top:190.7px;width:38.5px">508.97</div>
<div class="c dc" style="left:743.0px;top:190.7px;width:39.0px">509.02</div>
<div class="c dc" style="left:782.0px;top:190.7px;width:35.0px">1.11</div>
<div class="c dc" style="left:817.0px;top:190.7px;width:35.0px">1.22</div>
<div class="c dc" style="left:447.5px;top:202.7px;width:35.5px"><span class="dw">W</span>5</div>
<div class="c dc" style="left:483.0px;top:202.7px;width:35.0px"><span class="dw">W</span>6</div>
<div class="c dc" style="left:518.0px;top:202.7px;width:38.5px">200</div>
<div class="c dc" style="left:556.5px;top:202.7px;width:38.5px">11.07</div>
<div class="c dc" style="left:595.0px;top:202.7px;width:38.5px">0.003</div>
<div class="c dc" style="left:633.5px;top:202.7px;width:35.5px">507.60</div>
<div class="c dc" style="left:669.0px;top:202.7px;width:35.5px">507.57</div>
<div class="c dc" style="left:704.5px;top:202.7px;width:38.5px">509.02</div>
<div class="c dc" style="left:743.0px;top:202.7px;width:39.0px">509.04</div>
<div class="c dc" style="left:782.0px;top:202.7px;width:35.0px">1.22</div>
<div class="c dc" style="left:817.0px;top:202.7px;width:35.0px">1.27</div>
<div class="c dc" style="left:447.5px;top:214.7px;width:35.5px"><span class="dw">W</span>6</div>
<div class="c dc" style="left:483.0px;top:214.7px;width:35.0px"><span class="dw">W</span>7</div>
<div class="c dc" style="left:518.0px;top:214.7px;width:38.5px">200</div>
<div class="c dc" style="left:556.5px;top:214.7px;width:38.5px">13.21</div>
<div class="c dc" style="left:595.0px;top:214.7px;width:38.5px">0.003</div>
<div class="c dc" style="left:633.5px;top:214.7px;width:35.5px">507.57</div>
<div class="c dc" style="left:669.0px;top:214.7px;width:35.5px">507.53</div>
<div class="c dc" style="left:704.5px;top:214.7px;width:38.5px">509.04</div>
<div class="c dc" style="left:743.0px;top:214.7px;width:39.0px">509.04</div>
<div class="c dc" style="left:782.0px;top:214.7px;width:35.0px">1.27</div>
<div class="c dc" style="left:817.0px;top:214.7px;width:35.0px">1.31</div>
<div class="c dc" style="left:447.5px;top:226.7px;width:35.5px"><span class="dw">W</span>7</div>
<div class="c dc" style="left:483.0px;top:226.7px;width:35.0px"><span class="dw">W</span>8</div>
<div class="c dc" style="left:518.0px;top:226.7px;width:38.5px">200</div>
<div class="c dc" style="left:556.5px;top:226.7px;width:38.5px">10.29</div>
<div class="c dc" style="left:595.0px;top:226.7px;width:38.5px">0.003</div>
<div class="c dc" style="left:633.5px;top:226.7px;width:35.5px">507.53</div>
<div class="c dc" style="left:669.0px;top:226.7px;width:35.5px">507.50</div>
<div class="c dc" style="left:704.5px;top:226.7px;width:38.5px">509.04</div>
<div class="c dc" style="left:743.0px;top:226.7px;width:39.0px">509.39</div>
<div class="c dc" style="left:782.0px;top:226.7px;width:35.0px">1.31</div>
<div class="c dc" style="left:817.0px;top:226.7px;width:35.0px">1.69</div>
<div class="c dc" style="left:447.5px;top:238.7px;width:35.5px"><span class="dw">W</span>8</div>
<div class="c dc" style="left:483.0px;top:238.7px;width:35.0px"><span class="dw">W</span>9</div>
<div class="c dc" style="left:518.0px;top:238.7px;width:38.5px">200</div>
<div class="c dc" style="left:556.5px;top:238.7px;width:38.5px">15.44</div>
<div class="c dc" style="left:595.0px;top:238.7px;width:38.5px">0.003</div>
<div class="c dc" style="left:633.5px;top:238.7px;width:35.5px">507.50</div>
<div class="c dc" style="left:669.0px;top:238.7px;width:35.5px">507.45</div>
<div class="c dc" style="left:704.5px;top:238.7px;width:38.5px">509.39</div>
<div class="c dc" style="left:743.0px;top:238.7px;width:39.0px">509.39</div>
<div class="c dc" style="left:782.0px;top:238.7px;width:35.0px">1.69</div>
<div class="c dc" style="left:817.0px;top:238.7px;width:35.0px">1.74</div>
<div class="c dc" style="left:447.5px;top:250.7px;width:35.5px"><span class="dw">W</span>9</div>
<div class="c dc" style="left:483.0px;top:250.7px;width:35.0px"><span class="dw">W</span>10</div>
<div class="c dc" style="left:518.0px;top:250.7px;width:38.5px">200</div>
<div class="c dc" style="left:556.5px;top:250.7px;width:38.5px">22.93</div>
<div class="c dc" style="left:595.0px;top:250.7px;width:38.5px">0.003</div>
<div class="c dc" style="left:633.5px;top:250.7px;width:35.5px">507.45</div>
<div class="c dc" style="left:669.0px;top:250.7px;width:35.5px">507.38</div>
<div class="c dc" style="left:704.5px;top:250.7px;width:38.5px">509.39</div>
<div class="c dc" style="left:743.0px;top:250.7px;width:39.0px">509.51</div>
<div class="c dc" style="left:782.0px;top:250.7px;width:35.0px">1.74</div>
<div class="c dc" style="left:817.0px;top:250.7px;width:35.0px">1.93</div>
<div class="c dc" style="left:447.5px;top:262.7px;width:35.5px"><span class="dw">W</span>10</div>
<div class="c dc" style="left:483.0px;top:262.7px;width:35.0px"><span class="dw">W</span>11</div>
<div class="c dc" style="left:518.0px;top:262.7px;width:38.5px">200</div>
<div class="c dc" style="left:556.5px;top:262.7px;width:38.5px">9.20</div>
<div class="c dc" style="left:595.0px;top:262.7px;width:38.5px">0.003</div>
<div class="c dc" style="left:633.5px;top:262.7px;width:35.5px">507.38</div>
<div class="c dc" style="left:669.0px;top:262.7px;width:35.5px">507.35</div>
<div class="c dc" style="left:704.5px;top:262.7px;width:38.5px">509.51</div>
<div class="c dc" style="left:743.0px;top:262.7px;width:39.0px">509.51</div>
<div class="c dc" style="left:782.0px;top:262.7px;width:35.0px">1.93</div>
<div class="c dc" style="left:817.0px;top:262.7px;width:35.0px">1.96</div>
<div class="c dc" style="left:447.5px;top:274.7px;width:35.5px"><span class="dw">W</span>11</div>
<div class="c dc" style="left:483.0px;top:274.7px;width:35.0px"><span class="dw">W</span>12</div>
<div class="c dc" style="left:518.0px;top:274.7px;width:38.5px">200</div>
<div class="c dc" style="left:556.5px;top:274.7px;width:38.5px">41.11</div>
<div class="c dc" style="left:595.0px;top:274.7px;width:38.5px">0.003</div>
<div class="c dc" style="left:633.5px;top:274.7px;width:35.5px">507.35</div>
<div class="c dc" style="left:669.0px;top:274.7px;width:35.5px">507.23</div>
<div class="c dc" style="left:704.5px;top:274.7px;width:38.5px">509.51</div>
<div class="c dc" style="left:743.0px;top:274.7px;width:39.0px">509.49</div>
<div class="c dc" style="left:782.0px;top:274.7px;width:35.0px">1.96</div>
<div class="c dc" style="left:817.0px;top:274.7px;width:35.0px">2.06</div>
<div class="c dc" style="left:447.5px;top:286.7px;width:35.5px"><span class="dw">W</span>12</div>
<div class="c dc" style="left:483.0px;top:286.7px;width:35.0px"><span class="dw">W</span>13</div>
<div class="c dc" style="left:518.0px;top:286.7px;width:38.5px">200</div>
<div class="c dc" style="left:556.5px;top:286.7px;width:38.5px">13.05</div>
<div class="c dc" style="left:595.0px;top:286.7px;width:38.5px">0.003</div>
<div class="c dc" style="left:633.5px;top:286.7px;width:35.5px">507.23</div>
<div class="c dc" style="left:669.0px;top:286.7px;width:35.5px">507.19</div>
<div class="c dc" style="left:704.5px;top:286.7px;width:38.5px">509.49</div>
<div class="c dc" style="left:743.0px;top:286.7px;width:39.0px">509.49</div>
<div class="c dc" style="left:782.0px;top:286.7px;width:35.0px">2.06</div>
<div class="c dc" style="left:817.0px;top:286.7px;width:35.0px">2.10</div>
<div class="c dc" style="left:447.5px;top:298.7px;width:35.5px"><span class="dw">W</span>13</div>
<div class="c dc" style="left:483.0px;top:298.7px;width:35.0px"><span class="dw">W</span>14</div>
<div class="c dc" style="left:518.0px;top:298.7px;width:38.5px">200</div>
<div class="c dc" style="left:556.5px;top:298.7px;width:38.5px">11.41</div>
<div class="c dc" style="left:595.0px;top:298.7px;width:38.5px">0.003</div>
<div class="c dc" style="left:633.5px;top:298.7px;width:35.5px">507.19</div>
<div class="c dc" style="left:669.0px;top:298.7px;width:35.5px">507.16</div>
<div class="c dc" style="left:704.5px;top:298.7px;width:38.5px">509.49</div>
<div class="c dc" style="left:743.0px;top:298.7px;width:39.0px">509.62</div>
<div class="c dc" style="left:782.0px;top:298.7px;width:35.0px">2.10</div>
<div class="c dc" style="left:817.0px;top:298.7px;width:35.0px">2.26</div>
<div class="a btn" style="left:543.0px;top:391.5px;width:51.0px;">初算</div>
<div class="a btn" style="left:598.0px;top:391.5px;width:51.0px;">复算</div>
<div class="a btn" style="left:652.0px;top:391.5px;width:51.5px;">数据赋回</div>
<div class="a btn" style="left:713.5px;top:391.5px;width:51.5px;">查看分支</div>
<div class="a btn" style="left:768.5px;top:391.5px;width:51.5px;border-color:#3b9cc4;box-shadow:0 0 0 1px #7fd0ea inset;">查看图面</div>
<div class="a btn" style="left:823.0px;top:391.5px;width:52.0px;">退出</div>
</body></html>
